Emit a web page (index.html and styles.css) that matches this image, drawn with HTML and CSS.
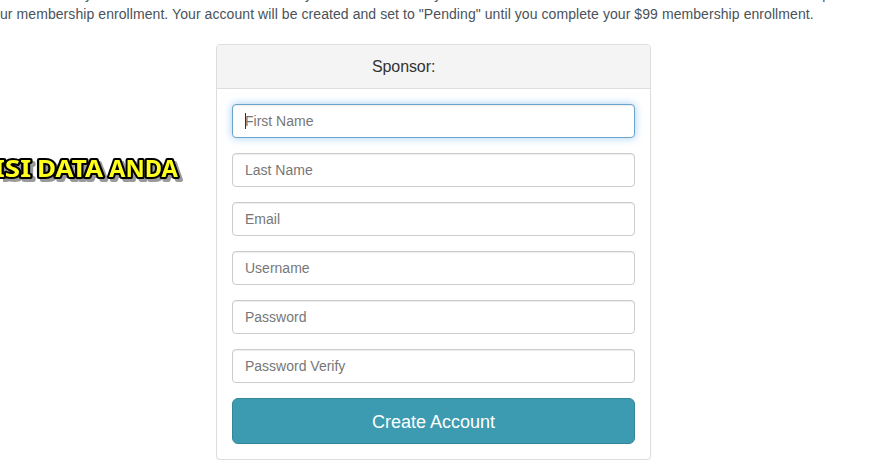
FILE: index.html
```html
<!DOCTYPE html>
<html lang="en">
<head>
  <meta charset="UTF-8" />
  <meta name="viewport" content="width=device-width, initial-scale=1.0"/>
  <title>Create Account</title>
  <link rel="stylesheet" href="styles.css">
</head>
<body>
  <div class="intro">
    <p class="intro-cut"><span>y</span><span>y</span><span>y</span><span>p</span></p>
    <p>ur membership enrollment. Your account will be created and set to "Pending" until you complete your $99 membership enrollment.</p>
  </div>

  <div class="content">
    <div class="note">
      <svg width="200" height="40" viewBox="0 0 200 40">
        <text x="-6" y="24" textLength="37" lengthAdjust="spacingAndGlyphs">ISI</text>
        <text x="37" y="24" textLength="66" lengthAdjust="spacingAndGlyphs">DATA</text>
        <text x="109" y="24" textLength="69" lengthAdjust="spacingAndGlyphs">ANDA</text>
      </svg>
    </div>

    <div class="panel">
      <div class="panel-heading">
        <h3>Sponsor:</h3>
      </div>
      <form class="panel-body">
        <div class="field">
          <input type="text" class="form-control active" placeholder="First Name">
          <span class="caret"></span>
        </div>
        <input type="text" class="form-control" placeholder="Last Name">
        <input type="email" class="form-control" placeholder="Email">
        <input type="text" class="form-control" placeholder="Username">
        <input type="password" class="form-control" placeholder="Password">
        <input type="password" class="form-control" placeholder="Password Verify">
        <button type="button" class="btn">Create Account</button>
      </form>
    </div>
  </div>
</body>
</html>
```
FILE: styles.css
```css
* { box-sizing: border-box; margin: 0; padding: 0; }
body {
  font-family: "Liberation Sans", Arial, sans-serif;
  font-size: 14px;
  line-height: 20px;
  color: #4a525a;
  background: #fff;
  overflow: hidden;
}
.intro {
  margin-top: -16px;
  letter-spacing: 0.073px;
  white-space: nowrap;
}
.intro-cut {
  display: flex;
}
.intro-cut span:nth-child(1) { margin-left: 85px; }
.intro-cut span:nth-child(2) { margin-left: 213px; }
.intro-cut span:nth-child(3) { margin-left: 122px; }
.intro-cut span:nth-child(4) { margin-left: 381px; }
.content {
  display: flex;
  align-items: flex-start;
  margin-top: 20px;
}
.note {
  width: 216px;
  padding-top: 109px;
}
.note svg {
  display: block;
  filter: drop-shadow(3px 3px 0 #999);
}
.note text {
  font-family: "Noto Sans", sans-serif;
  font-size: 23px;
  font-weight: 700;
  fill: #ffff1e;
  stroke: #000;
  stroke-width: 4px;
  stroke-linejoin: round;
  paint-order: stroke;
}
.panel {
  width: 435px;
  border: 1px solid #ddd;
  border-radius: 4px;
  box-shadow: 0 1px 1px rgba(0, 0, 0, 0.05);
}
.panel-heading {
  height: 44px;
  padding: 12px 15px 12px 155px;
  background: #f4f4f4;
  border-bottom: 1px solid #ddd;
  border-radius: 3px 3px 0 0;
}
.panel-heading h3 {
  font-size: 16px;
  font-weight: 400;
  line-height: 20px;
  letter-spacing: -0.1px;
  color: #333;
}
.panel-body {
  display: flex;
  flex-direction: column;
  gap: 15px;
  padding: 15px;
}
.field {
  position: relative;
  display: flex;
}
.caret {
  position: absolute;
  left: 13px;
  top: 9px;
  width: 1px;
  height: 16px;
  background: #333;
}
.form-control {
  width: 100%;
  height: 34px;
  padding: 6px 12px;
  font: inherit;
  color: #555;
  background: #fff;
  border: 1px solid #ccc;
  border-radius: 4px;
  box-shadow: inset 0 1px 1px rgba(0, 0, 0, 0.075);
  outline: none;
}
.form-control::placeholder {
  color: #777;
  opacity: 1;
}
.form-control.active,
.form-control:focus {
  border-color: #6ba3c9;
  box-shadow: inset 0 1px 1px rgba(0, 0, 0, 0.075), 0 0 8px rgba(102, 175, 233, 0.6);
}
.btn {
  height: 46px;
  padding-top: 2px;
  font-family: inherit;
  font-size: 18px;
  color: #fff;
  background: #3c9bb0;
  border: 1px solid #35859b;
  border-radius: 6px;
  cursor: pointer;
}
```
